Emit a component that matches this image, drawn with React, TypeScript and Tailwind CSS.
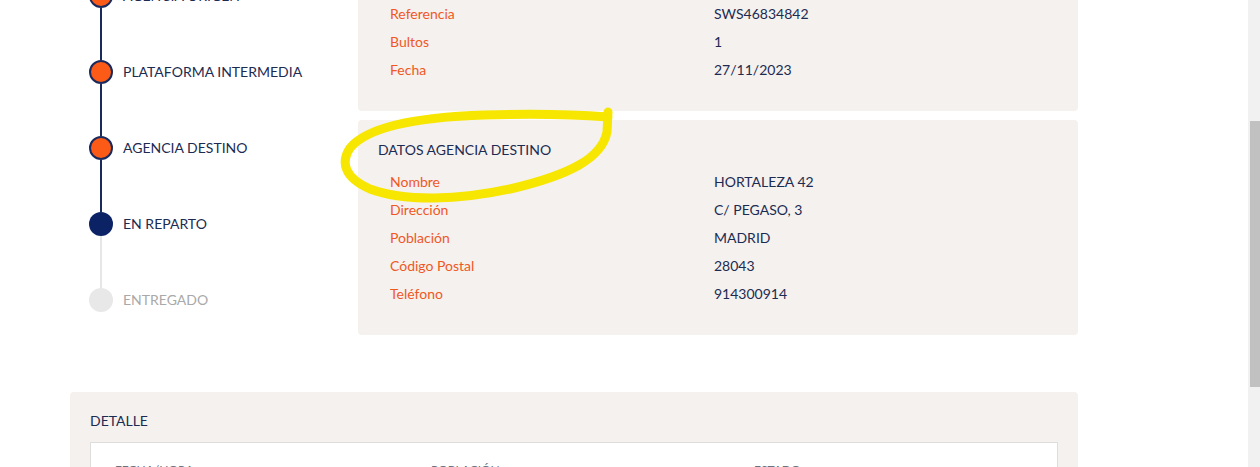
import React from "react";

type Step = { label: string; state: "done" | "current" | "pending" };

const steps: Step[] = [
  { label: "AGENCIA ORIGEN", state: "done" },
  { label: "PLATAFORMA INTERMEDIA", state: "done" },
  { label: "AGENCIA DESTINO", state: "done" },
  { label: "EN REPARTO", state: "current" },
  { label: "ENTREGADO", state: "pending" },
];

const envio = [
  { k: "Referencia", v: "SWS46834842" },
  { k: "Bultos", v: "1" },
  { k: "Fecha", v: "27/11/2023" },
];

const agencia = [
  { k: "Nombre", v: "HORTALEZA 42" },
  { k: "Dirección", v: "C/ PEGASO, 3" },
  { k: "Población", v: "MADRID" },
  { k: "Código Postal", v: "28043" },
  { k: "Teléfono", v: "914300914" },
];

function Timeline() {
  return (
    <div className="w-[288px] shrink-0 pt-[6px] pl-[19px]">
      {steps.map((s, i) => {
        const reached = s.state !== "pending";
        const next = steps[i + 1];
        const nextReached = next && next.state !== "pending";
        return (
          <div key={s.label} className="flex h-[76px] items-stretch">
            <div className="flex w-[24px] flex-col items-center">
              <div
                className={
                  i === 0
                    ? "w-[2px] flex-1"
                    : reached
                    ? "w-[2px] flex-1 bg-[#1b2a5c]"
                    : "w-[2px] flex-1 bg-[#e6e6e6]"
                }
              />
              {s.state === "done" && (
                <div className="h-[24px] w-[24px] shrink-0 rounded-full border-2 border-[#1b2a5c] bg-[#fb5a17]" />
              )}
              {s.state === "current" && (
                <div className="h-[24px] w-[24px] shrink-0 rounded-full bg-[#0b2265]" />
              )}
              {s.state === "pending" && (
                <div className="h-[24px] w-[24px] shrink-0 rounded-full bg-[#e8e8e8]" />
              )}
              <div
                className={
                  !next
                    ? "w-[2px] flex-1"
                    : nextReached
                    ? "w-[2px] flex-1 bg-[#1b2a5c]"
                    : "w-[2px] flex-1 bg-[#e6e6e6]"
                }
              />
            </div>
            <div
              className={
                reached
                  ? "ml-[10px] flex items-center pb-[2px] text-[14px] text-[#1c2b52]"
                  : "ml-[10px] flex items-center pb-[2px] text-[14px] text-[#a9a9a9]"
              }
            >
              {s.label}
            </div>
          </div>
        );
      })}
    </div>
  );
}

function InfoCard({ title, rows }: { title: string; rows: { k: string; v: string }[] }) {
  return (
    <div className="rounded-[4px] bg-[#f4f1ee] pt-5 pb-[28px]">
      <div className="pl-5 text-[14px] leading-5 text-[#1c2b52]">{title}</div>
      <div className="mt-[7px]">
        {rows.map((r) => (
          <div key={r.k} className="flex h-[28px] items-center pl-8 text-[14px]">
            <div className="w-[324px] text-[#f0581f]">{r.k}</div>
            <div className="text-[#1c2b52]">{r.v}</div>
          </div>
        ))}
      </div>
    </div>
  );
}

export default function App() {
  return (
    <div className="relative flex h-[467px] w-[1260px] overflow-hidden bg-white font-['Lato',sans-serif]">
      <div className="flex-1">
        <div className="mt-[-48px] pl-[70px]">
          <div className="flex">
            <Timeline />
            <div className="w-[720px]">
              <InfoCard title="DATOS ENVÍO" rows={envio} />
              <div className="mt-[9px]">
                <InfoCard title="DATOS AGENCIA DESTINO" rows={agencia} />
              </div>
            </div>
          </div>

          <div className="mt-[54px] w-[1008px] rounded-[4px] bg-[#f4f1ee] px-5 pt-[19px]">
            <div className="text-[14px] leading-5 text-[#1c2b52]">DETALLE</div>
            <div className="mt-[11px] h-[120px] border border-[#dddddd] bg-white">
              <div className="flex pt-[19px] text-[12px] leading-4 text-[#6b7280]">
                <div className="w-[340px] pl-[24px]">FECHA/HORA</div>
                <div className="w-[323px]">POBLACIÓN</div>
                <div>ESTADO</div>
              </div>
            </div>
          </div>
        </div>
      </div>

      {/* scrollbar */}
      <div className="flex w-[12px] shrink-0 flex-col bg-[#f1f1f1] pl-[2px]">
        <div className="mt-[121px] h-[266px] bg-[#c1c1c1]" />
      </div>

      {/* yellow marker annotation */}
      <svg
        className="pointer-events-none absolute left-0 top-0"
        width="1260"
        height="467"
        viewBox="0 0 1260 467"
      >
        <path
          d="M 608 112 L 607 132 C 602 158 570 175 510 189 C 460 200 405 202 370 189 C 345 178 340 163 350 148 C 368 126 420 117 485 115 C 545 113 582 115 608 117"
          fill="none"
          stroke="#f7e600"
          strokeWidth="9"
          strokeLinecap="round"
          strokeLinejoin="round"
        />
      </svg>
    </div>
  );
}
